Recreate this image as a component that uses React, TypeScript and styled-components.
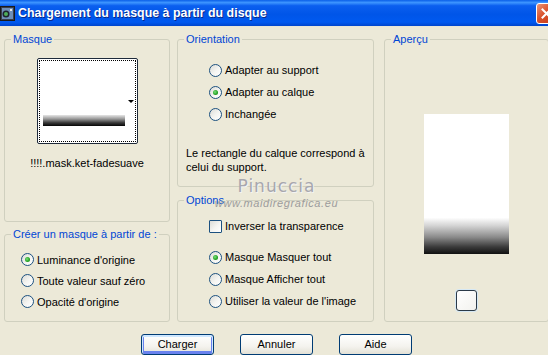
import * as React from 'react';
import styled, { createGlobalStyle, css } from 'styled-components';

const GlobalStyle = createGlobalStyle`
  html, body {
    margin: 0;
    padding: 0;
    width: 548px;
    height: 355px;
    overflow: hidden;
    background: #ECE9D8;
  }
  body {
    font-family: "Liberation Sans", Arial, sans-serif;
    font-size: 11px;
    color: #000;
  }
`;

const Window = styled.div`
  position: relative;
  width: 553px;
  height: 355px;
  display: flex;
  flex-direction: column;
  background: #ECE9D8;
`;

const TitleBar = styled.div`
  height: 26px;
  flex: none;
  display: flex;
  align-items: center;
  background: linear-gradient(to bottom, #0A5FE8 0%, #3D95FF 10%, #0B5FEF 22%, #0055E8 55%, #0059F0 85%, #0045CC 100%);
  border-bottom: 1px solid #E8E6D8;
`;

const TitleIcon = styled.svg`
  width: 15px;
  height: 15px;
  margin: 0 3px 0 0;
  flex: none;
`;

const TitleText = styled.span`
  font-family: "Liberation Sans", Arial, sans-serif;
  font-weight: bold;
  font-size: 12.4px;
  color: #fff;
  text-shadow: 1px 1px 0 #0A2A8A;
  white-space: nowrap;
`;

const CloseButton = styled.div`
  margin-left: auto;
  margin-right: -4px;
  width: 19px;
  height: 19px;
  border: 1px solid #fff;
  border-radius: 3px;
  background: linear-gradient(135deg, #E8957A 0%, #D9502A 45%, #C23A14 100%);
  display: flex;
  align-items: center;
  justify-content: center;
`;

const Body = styled.div`
  display: flex;
  padding: 12px 0 0 4px;
`;

const Column = styled.div<{ $gap: number; $offset: number }>`
  display: flex;
  flex-direction: column;
  gap: ${p => p.$gap}px;
  margin-left: ${p => p.$offset}px;
`;

const Group = styled.div<{ $w: number; $h: number }>`
  position: relative;
  box-sizing: border-box;
  width: ${p => p.$w}px;
  height: ${p => p.$h}px;
  border: 1px solid #D0D0BF;
  border-radius: 3px;
  display: flex;
  flex-direction: column;
`;

const Caption = styled.span`
  position: absolute;
  top: -7px;
  left: 6px;
  padding: 0 2px;
  line-height: 13px;
  background: #ECE9D8;
  color: #0046D5;
  white-space: nowrap;
`;

const MaskThumb = styled.div`
  position: relative;
  align-self: center;
  margin-top: 18px;
  box-sizing: border-box;
  width: 101px;
  height: 86px;
  border: 1px solid #1E2A3A;
  border-radius: 2px;
  background: #fff;
  padding: 1px;
`;

const FocusRect = styled.div`
  box-sizing: border-box;
  height: 100%;
  border: 1px dotted #000;
  position: relative;
`;

const MaskBar = styled.div`
  position: absolute;
  left: 3px;
  top: 54px;
  width: 82px;
  height: 11px;
  background: linear-gradient(to bottom, #E6E6E6 0%, #9A9A9A 35%, #3A3A3A 70%, #050505 100%);
`;

const DropArrow = styled.div`
  position: absolute;
  right: 1px;
  top: 39px;
  width: 0;
  height: 0;
  border-left: 3px solid transparent;
  border-right: 3px solid transparent;
  border-top: 3px solid #000;
`;

const FileName = styled.div`
  margin-top: 13px;
  text-align: center;
  line-height: 13px;
`;

const RadioList = styled.div<{ $top: number; $left: number; $row: number }>`
  display: flex;
  flex-direction: column;
  padding-top: ${p => p.$top}px;
  padding-left: ${p => p.$left}px;
  & > * {
    height: ${p => p.$row}px;
  }
`;

const OptionRow = styled.label`
  display: flex;
  align-items: center;
  gap: 3px;
  white-space: nowrap;
`;

const xpBox = css`
  box-sizing: border-box;
  width: 13px;
  height: 13px;
  flex: none;
  border: 1px solid #1C5180;
  background: linear-gradient(135deg, #DCDCD7 0%, #F5F5F2 55%, #FFFFFF 100%);
`;

const Radio = styled.span<{ $checked?: boolean }>`
  ${xpBox}
  border-radius: 50%;
  position: relative;
  ${p =>
    p.$checked &&
    css`
      &::after {
        content: '';
        position: absolute;
        left: 3px;
        top: 3px;
        width: 5px;
        height: 5px;
        border-radius: 50%;
        background: radial-gradient(circle at 40% 40%, #7BE07B 0%, #21A121 60%, #188018 100%);
      }
    `}
`;

const CheckBox = styled.span`
  ${xpBox}
  border-radius: 1px;
`;

const Note = styled.p`
  margin: 21px 0 0 8px;
  line-height: 14px;
`;

const Spacer = styled.div<{ $h: number }>`
  height: ${p => p.$h}px;
  flex: none;
`;

const Preview = styled.div`
  align-self: center;
  margin-top: 74px;
  width: 85px;
  height: 140px;
  background: linear-gradient(to bottom, #fff 0%, #fff 74%, #D2D2D2 80%, #8A8A8A 88%, #3A3A3A 95%, #111 100%);
`;

const IconButton = styled.div`
  align-self: center;
  margin-top: 36px;
  box-sizing: border-box;
  width: 21px;
  height: 21px;
  border: 1px solid #2B3A48;
  border-radius: 3px;
  background: linear-gradient(135deg, #FFFFFF 0%, #F2F2EE 100%);
  box-shadow: 0 0 0 1px #D6E8F4;
`;

const ButtonRow = styled.div`
  display: flex;
  justify-content: center;
  gap: 26px;
  margin-top: 12px;
`;

const Button = styled.div<{ $default?: boolean }>`
  box-sizing: border-box;
  width: 73px;
  height: 21px;
  border: 1px solid #003C74;
  border-radius: 3px;
  background: linear-gradient(to bottom, #FFFFFF 0%, #F4F3EE 60%, #E3E1D6 100%);
  display: flex;
  align-items: center;
  justify-content: center;
  line-height: 13px;
  ${p =>
    p.$default &&
    css`
      box-shadow: inset 0 1px 0 1px #CEE7FF, inset 0 -1px 0 2px #6982EE;
    `}
`;

const Watermark = styled.div`
  position: absolute;
  left: 214px;
  top: 175px;
  width: 125px;
  display: flex;
  flex-direction: column;
  align-items: center;
  pointer-events: none;
`;

const WatermarkName = styled.span`
  font-family: "DejaVu Sans", sans-serif;
  font-size: 17px;
  letter-spacing: 1px;
  line-height: 22px;
  color: #A7A7AE;
  text-shadow: 1px 1px 0 #F4F4F4;
`;

const WatermarkUrl = styled.span`
  font-family: "Liberation Sans", Arial, sans-serif;
  font-style: italic;
  font-size: 11px;
  letter-spacing: 0.6px;
  line-height: 13px;
  color: #9C9C9C;
`;

export const App = (): React.ReactElement => (
  <Window>
    <GlobalStyle />
    <TitleBar>
      <TitleIcon viewBox="0 0 15 15">
        <rect x="0.5" y="0.5" width="14" height="14" fill="#3B3F4A" stroke="#1A1A1A" />
        <rect x="2" y="2" width="11" height="11" fill="#6E8FB8" />
        <circle cx="6" cy="8" r="3.5" fill="#1C2430" />
        <circle cx="6" cy="8" r="2" fill="#4FAE5A" />
        <rect x="10" y="3" width="2" height="2" fill="#E6E6E6" />
      </TitleIcon>
      <TitleText>Chargement du masque à partir du disque</TitleText>
      <CloseButton>
        <svg width="11" height="11" viewBox="0 0 11 11">
          <path d="M1.5 1.5 L9.5 9.5 M9.5 1.5 L1.5 9.5" stroke="#fff" strokeWidth="2" strokeLinecap="square" />
        </svg>
      </CloseButton>
    </TitleBar>

    <Body>
      <Column $gap={12} $offset={0}>
        <Group $w={166} $h={183}>
          <Caption>Masque</Caption>
          <MaskThumb>
            <FocusRect>
              <MaskBar />
              <DropArrow />
            </FocusRect>
          </MaskThumb>
          <FileName>!!!!.mask.ket-fadesuave</FileName>
        </Group>
        <Group $w={166} $h={88}>
          <Caption>Créer un masque à partir de :</Caption>
          <RadioList $top={14} $left={16} $row={21}>
            <OptionRow><Radio $checked />Luminance d'origine</OptionRow>
            <OptionRow><Radio />Toute valeur sauf zéro</OptionRow>
            <OptionRow><Radio />Opacité d'origine</OptionRow>
          </RadioList>
        </Group>
      </Column>

      <Column $gap={13} $offset={7}>
        <Group $w={197} $h={148}>
          <Caption>Orientation</Caption>
          <RadioList $top={19} $left={31} $row={22}>
            <OptionRow><Radio />Adapter au support</OptionRow>
            <OptionRow><Radio $checked />Adapter au calque</OptionRow>
            <OptionRow><Radio />Inchangée</OptionRow>
          </RadioList>
          <Note>
            Le rectangle du calque correspond à
            <br />
            celui du support.
          </Note>
        </Group>
        <Group $w={197} $h={122}>
          <Caption>Options</Caption>
          <RadioList $top={14} $left={31} $row={22}>
            <OptionRow><CheckBox />Inverser la transparence</OptionRow>
            <Spacer $h={9} />
            <OptionRow><Radio $checked />Masque Masquer tout</OptionRow>
            <OptionRow><Radio />Masque Afficher tout</OptionRow>
            <OptionRow><Radio />Utiliser la valeur de l'image</OptionRow>
          </RadioList>
        </Group>
      </Column>

      <Column $gap={0} $offset={10}>
        <Group $w={165} $h={283}>
          <Caption>Aperçu</Caption>
          <Preview />
          <IconButton />
        </Group>
      </Column>
    </Body>

    <ButtonRow>
      <Button $default>Charger</Button>
      <Button>Annuler</Button>
      <Button>Aide</Button>
    </ButtonRow>

    <Watermark>
      <WatermarkName>Pinuccia</WatermarkName>
      <WatermarkUrl>www.maidiregrafica.eu</WatermarkUrl>
    </Watermark>
  </Window>
);

export default App;
